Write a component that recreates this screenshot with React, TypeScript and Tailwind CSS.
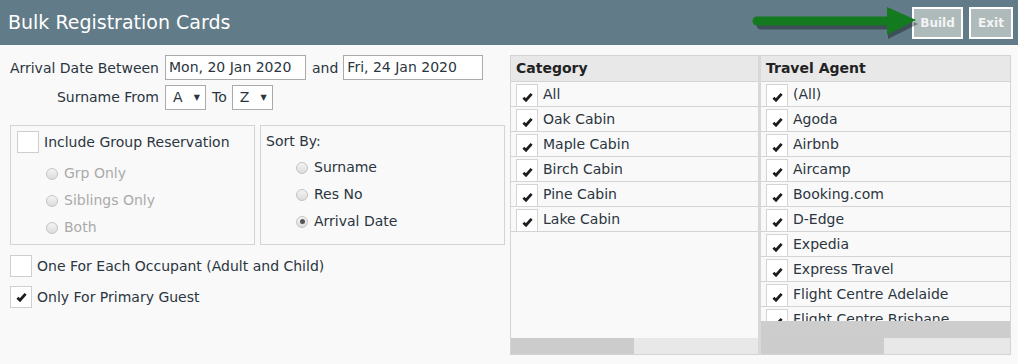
import React from 'react'

const categories = ['All', 'Oak Cabin', 'Maple Cabin', 'Birch Cabin', 'Pine Cabin', 'Lake Cabin']
const agents = [
  '(All)',
  'Agoda',
  'Airbnb',
  'Aircamp',
  'Booking.com',
  'D-Edge',
  'Expedia',
  'Express Travel',
  'Flight Centre Adelaide',
  'Flight Centre Brisbane',
]

function Tick() {
  return (
    <svg width="11" height="10" viewBox="0 0 11 10">
      <path d="M1.4 5.8 L4 8.2 L9.6 1.8" fill="none" stroke="#1c1c1c" strokeWidth="2.8" strokeLinejoin="miter" />
    </svg>
  )
}

function Box({ checked }: { checked?: boolean }) {
  return (
    <span className="w-[22px] h-[22px] shrink-0 border border-[#cfcfcf] bg-white flex items-center justify-center">
      {checked && <Tick />}
    </span>
  )
}

function Radio({ checked, disabled, label }: { checked?: boolean; disabled?: boolean; label: string }) {
  return (
    <div className="flex items-center h-[27px]">
      <span className="w-[12px] h-[12px] rounded-full border border-[#c4c4c4] bg-gradient-to-b from-[#f4f4f4] to-[#dcdcdc] flex items-center justify-center">
        {checked && <span className="w-[5px] h-[5px] rounded-full bg-[#555]" />}
      </span>
      <span className={`ml-[6px] ${disabled ? 'text-[#aaaaaa]' : 'text-[#2b3540]'}`}>{label}</span>
    </div>
  )
}

function Select({ value }: { value: string }) {
  return (
    <span className="w-[41px] h-[25px] border border-[#aaa] bg-white flex items-center pl-[7px] pr-[5px] justify-between">
      <span>{value}</span>
      <span className="text-[8px] leading-none">▼</span>
    </span>
  )
}

function ListRow({ label }: { label: string }) {
  return (
    <div className="h-[25px] shrink-0 border-b border-[#d4d4d4] flex items-end pl-[5px]">
      <span className="w-[22px] h-[22px] shrink-0 border border-b-0 border-[#d4d4d4] bg-white flex items-center justify-center pt-[2px]">
        <Tick />
      </span>
      <span className="ml-[5px] self-center whitespace-nowrap">{label}</span>
    </div>
  )
}

export default function App() {
  return (
    <div className="w-[1018px] h-[364px] bg-[#f9f9f9] text-[14px] text-[#2b3540] overflow-hidden font-['DejaVu_Sans',Verdana,sans-serif]">
      {/* Header */}
      <div className="relative h-[45px] bg-[#627b88] flex items-center pl-[8px] pr-[5px]">
        <h1 className="text-[19px] text-white">Bulk Registration Cards</h1>
        <svg className="absolute left-[748px] top-[2px]" width="172" height="42" viewBox="0 0 172 42">
          <g transform="translate(2 3)" opacity="0.35">
            <line x1="11" y1="20" x2="142" y2="20" stroke="#000" strokeWidth="9" strokeLinecap="round" />
            <polygon points="138,5 168,19 138,34" fill="#000" />
          </g>
          <line x1="9" y1="19" x2="142" y2="19" stroke="#137a1f" strokeWidth="9" strokeLinecap="round" />
          <polygon points="139,5 168,18 139,33" fill="#137a1f" />
        </svg>
        <div className="ml-auto flex gap-[6px]">
          <button className="w-[51px] h-[32px] border-2 border-white bg-[#aebbba] text-[#f4f4f4] text-[12px] font-bold">Build</button>
          <button className="w-[44px] h-[32px] border-2 border-white bg-[#aebbba] text-[#f4f4f4] text-[12px] font-bold">Exit</button>
        </div>
      </div>

      <div className="flex pt-[10px] pl-[10px]">
        {/* Left form */}
        <div className="w-[495px] flex flex-col">
          <div className="flex items-center h-[25px]">
            <span className="w-[150px] shrink-0 flex justify-end whitespace-nowrap pr-[1px] pt-[2px]">Arrival Date Between</span>
            <span className="ml-[5px] w-[141px] h-[25px] border border-[#aaa] bg-white flex items-center pl-[3px]">Mon, 20 Jan 2020</span>
            <span className="ml-[6px] pt-[2px]">and</span>
            <span className="ml-[5px] w-[140px] h-[25px] border border-[#aaa] bg-white flex items-center pl-[3px]">Fri, 24 Jan 2020</span>
          </div>
          <div className="flex items-center h-[25px] mt-[5px]">
            <span className="w-[150px] shrink-0 flex justify-end whitespace-nowrap pr-[1px]">Surname From</span>
            <span className="ml-[5px]"><Select value="A" /></span>
            <span className="ml-[6px]">To</span>
            <span className="ml-[5px]"><Select value="Z" /></span>
          </div>

          <div className="flex gap-[5px] mt-[15px]">
            <div className="w-[245px] h-[120px] border border-[#d4d4d4] pt-[5px] pl-[6px]">
              <div className="flex items-center">
                <Box />
                <span className="ml-[5px] pt-[1px]">Include Group Reservation</span>
              </div>
              <div className="pl-[29px] mt-[7px]">
                <Radio disabled label="Grp Only" />
                <Radio disabled label="Siblings Only" />
                <Radio disabled label="Both" />
              </div>
            </div>
            <div className="w-[245px] h-[120px] border border-[#d4d4d4] pt-[5px] pl-[5px]">
              <div className="h-[20px] flex items-center">Sort By:</div>
              <div className="pl-[30px] mt-[3px]">
                <Radio label="Surname" />
                <Radio label="Res No" />
                <Radio checked label="Arrival Date" />
              </div>
            </div>
          </div>

          <div className="flex items-center mt-[10px]">
            <Box />
            <span className="ml-[5px] pt-[1px]">One For Each Occupant (Adult and Child)</span>
          </div>
          <div className="flex items-center mt-[9px]">
            <Box checked />
            <span className="ml-[5px] pt-[1px]">Only For Primary Guest</span>
          </div>
        </div>

        {/* Right lists */}
        <div className="ml-[5px] w-[501px] h-[300px] border border-[#d4d4d4] flex">
          <div className="w-[247px] flex flex-col">
            <div className="h-[26px] shrink-0 bg-[#e8e8e8] border-b border-[#d4d4d4] flex items-center pl-[5px] font-bold text-[#222]">Category</div>
            <div className="flex-1 flex flex-col">
              {categories.map(c => (
                <ListRow key={c} label={c} />
              ))}
            </div>
            <div className="h-[16px] shrink-0 flex">
              <div className="w-[123px] bg-[#cccccc]" />
              <div className="flex-1 bg-[#e8e8e8]" />
            </div>
          </div>
          <div className="w-[3px] bg-[#d8d8d8]" />
          <div className="flex-1 flex flex-col min-w-0">
            <div className="h-[26px] shrink-0 bg-[#e8e8e8] border-b border-[#d4d4d4] flex items-center pl-[5px] font-bold text-[#222]">Travel Agent</div>
            <div className="flex-1 flex flex-col overflow-hidden min-h-0">
              {agents.map(a => (
                <ListRow key={a} label={a} />
              ))}
            </div>
            <div className="h-[17px] shrink-0 bg-[#cdcdcd]" />
            <div className="h-[16px] shrink-0 flex">
              <div className="w-[123px] bg-[#cccccc]" />
              <div className="flex-1 bg-[#e8e8e8]" />
            </div>
          </div>
        </div>
      </div>
    </div>
  )
}
